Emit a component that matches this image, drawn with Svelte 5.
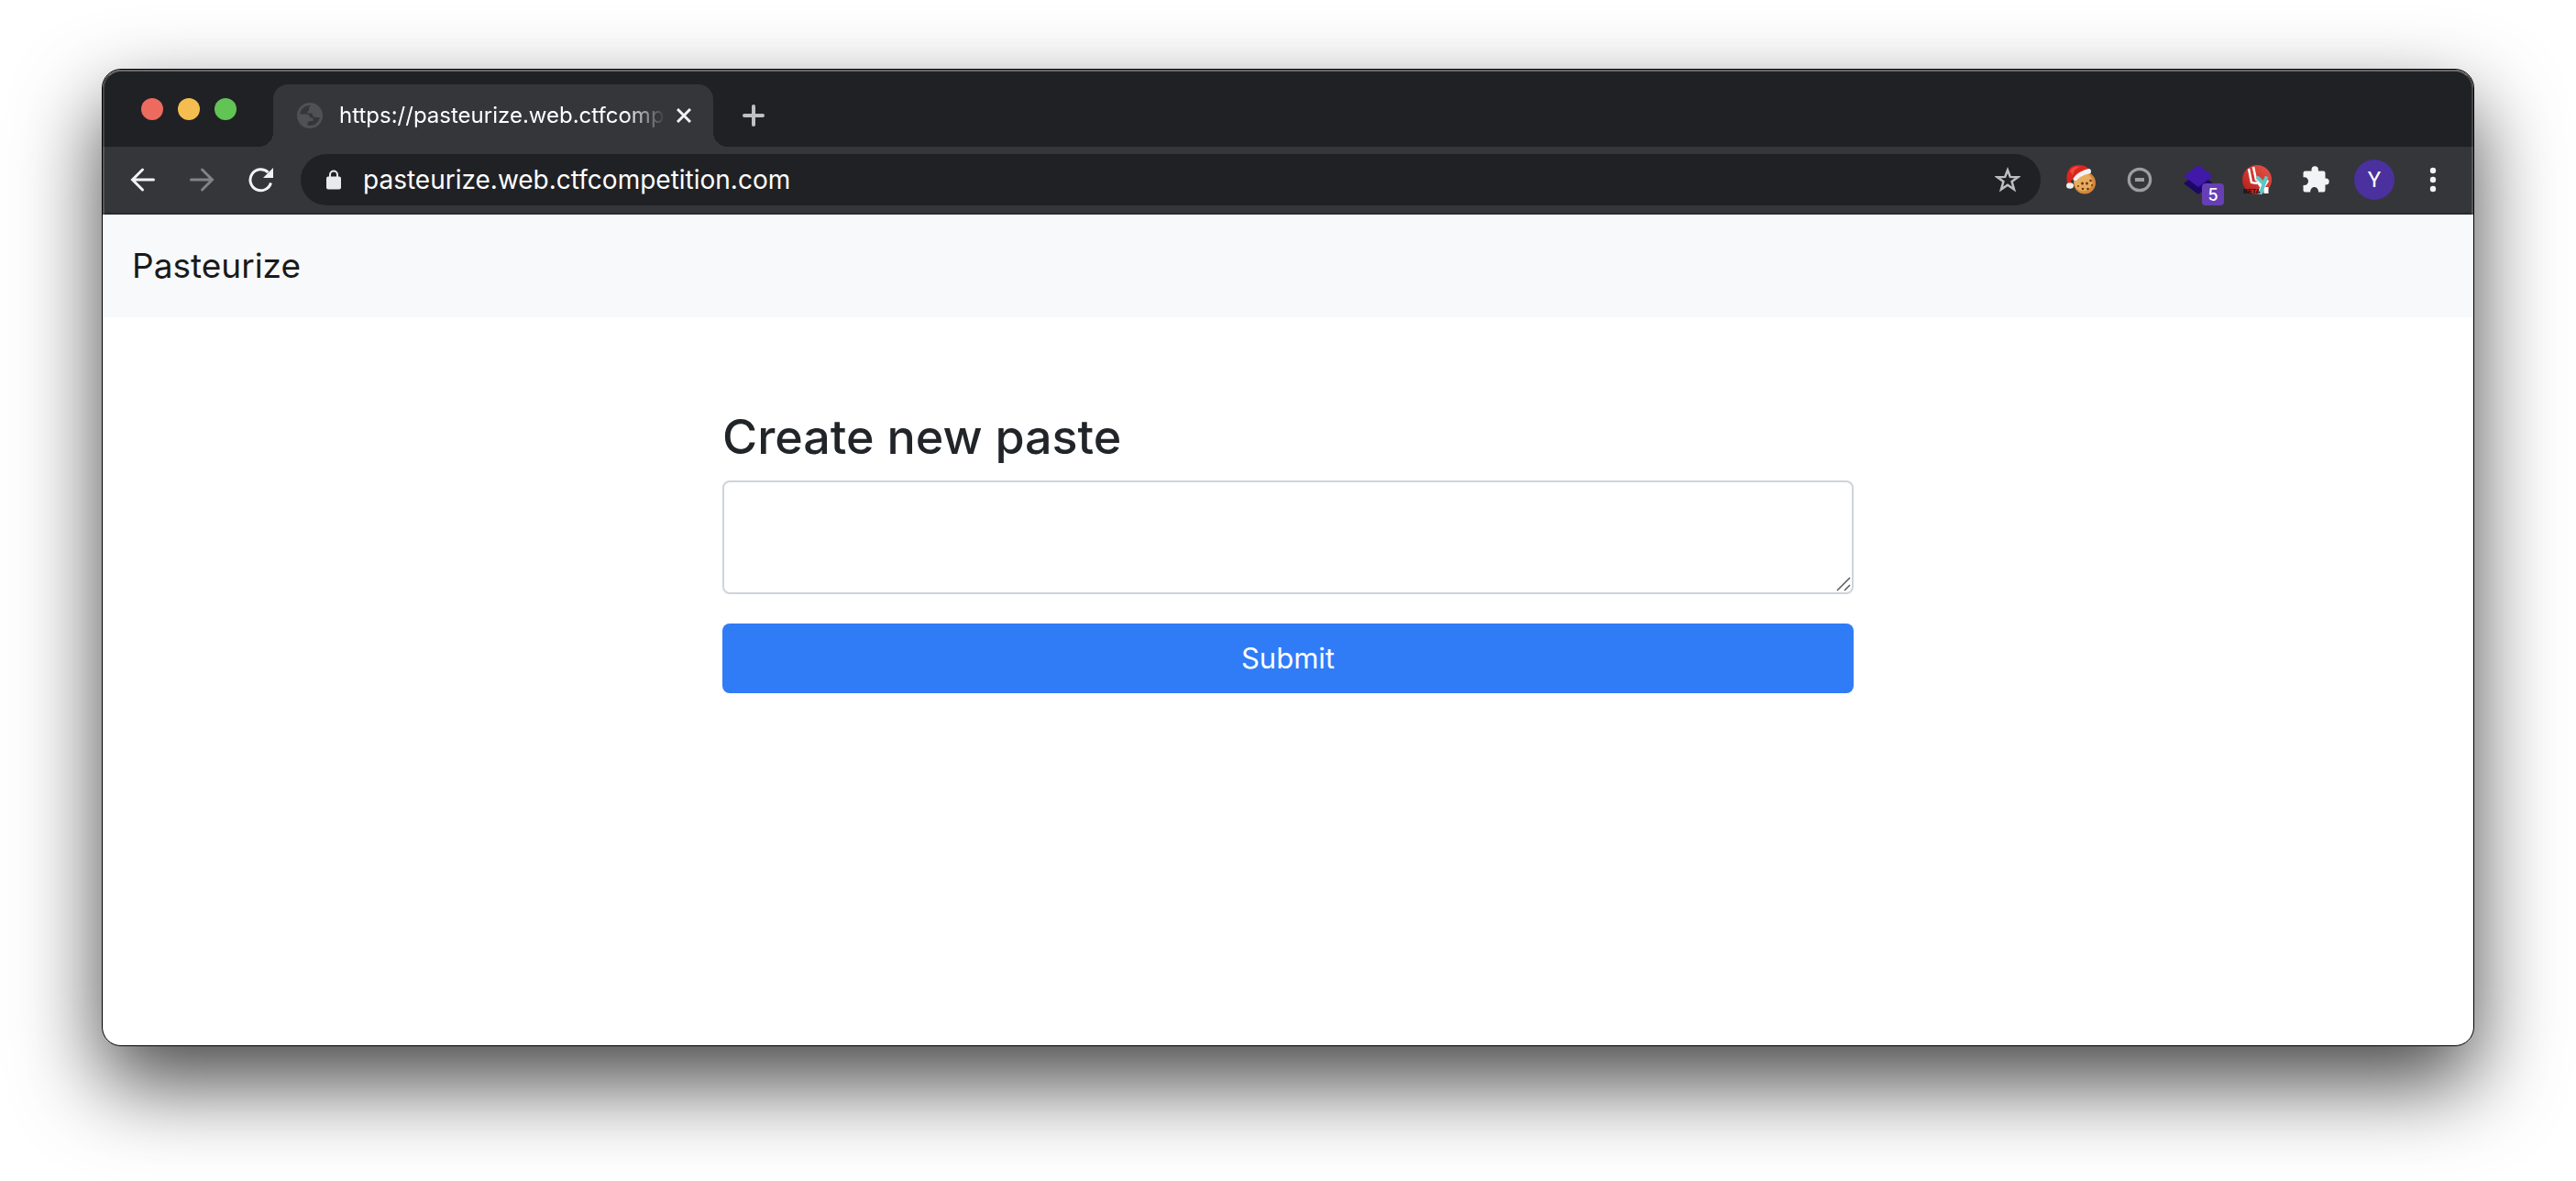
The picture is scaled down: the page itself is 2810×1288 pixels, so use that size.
<script>
  let address = $state('pasteurize.web.ctfcompetition.com');
  let content = $state('');
</script>

<div class="desktop">
  <div class="window">
    <header class="chrome">
      <div class="tabstrip">
        <div class="lights">
          <button class="light red" aria-label="Close window"></button>
          <button class="light yellow" aria-label="Minimize window"></button>
          <button class="light green" aria-label="Zoom window"></button>
        </div>
        <div class="tab">
          <svg class="globe" viewBox="0 0 28 28" aria-hidden="true">
            <circle cx="14" cy="14" r="12.5" fill="none" stroke="#505155" stroke-width="3" />
            <path d="M2 12.500h7.200c3.200 0 4.800 1.600 4.800 4h3.500v3.500h-3.500l-2.500 1.500v3.500l2.500 2.500A13 13 0 0 1 2 12.500z" fill="#505155" />
            <path d="M17 1.500c-1 2-3.600 2-4 4.500v2.500l-1.500 1v2h5c.3 2.500 1.500 4.500 4 4.500h5.500A12.500 12.500 0 0 0 17 1.500z" fill="#505155" />
          </svg>
          <span class="title">https://pasteurize.web.ctfcomp</span>
          <button class="close" aria-label="Close tab">
            <svg viewBox="0 0 16 16"><path d="M1 1l14 14M15 1L1 15" stroke="#f1f3f4" stroke-width="3" /></svg>
          </button>
        </div>
        <button class="icon newtab" aria-label="New tab">
          <svg width="24" height="24" viewBox="0 0 24 24"><path d="M12 2v20M2 12h20" stroke="#bdc1c6" stroke-width="4" stroke-linecap="round" /></svg>
        </button>
      </div>

      <div class="toolbar">
        <nav class="group" aria-label="History">
          <button class="icon" aria-label="Back">
            <svg width="28" height="28" viewBox="0 0 28 28" fill="none" stroke="#f1f3f4" stroke-width="3" stroke-linecap="round"><path d="M25.500 14H3M13.500 3L2.500 14l11 11" /></svg>
          </button>
          <button class="icon" aria-label="Forward">
            <svg width="28" height="28" viewBox="0 0 28 28" fill="none" stroke="#828386" stroke-width="3" stroke-linecap="round"><path d="M2.500 14H25M14.500 3l11 11-11 11" /></svg>
          </button>
          <button class="icon" aria-label="Reload">
            <svg width="28" height="28" viewBox="0 0 28 28" fill="none"><path d="M25.500 17.500A11.500 11.500 0 1 1 22.500 6" stroke="#f1f3f4" stroke-width="3" /><path d="M28 1v11H17z" fill="#f1f3f4" /></svg>
          </button>
        </nav>

        <div class="omnibox">
          <svg width="16" height="22" viewBox="0 0 16 22" aria-hidden="true"><rect y="7.500" width="16" height="14" rx="2" fill="#e8eaed" /><path d="M4 9V5.500a4 4 0 0 1 8 0V9" fill="none" stroke="#e8eaed" stroke-width="2" /></svg>
          <input type="text" aria-label="Address" bind:value={address} />
          <button class="icon" aria-label="Bookmark this page">
            <svg width="28" height="28" viewBox="0 0 28 28"><path d="M14 3.500l2.800 7.400 8.400.3-6.600 4.900 2.400 8.400-7-4.800-7 4.800 2.400-8.400-6.600-4.900 8.400-.3z" fill="none" stroke="#bdbebf" stroke-width="2.500" /></svg>
          </button>
        </div>

        <div class="group">
          <button class="icon" aria-label="Cookie extension">
            <svg width="32" height="32" viewBox="0 0 32 32">
              <circle cx="20" cy="19.500" r="12" fill="#d2873a" />
              <circle cx="18.500" cy="18.500" r="10" fill="#e8ac5e" />
              <g fill="#6b3417">
                <circle cx="17.500" cy="20" r="1.500" /><circle cx="22.500" cy="20" r="1.500" /><circle cx="26.500" cy="17" r="1.300" />
                <circle cx="13" cy="23" r="1" /><circle cx="18" cy="26" r="1.300" /><circle cx="23.500" cy="26" r="1.300" /><circle cx="28" cy="22" r="1" />
              </g>
              <path d="M1 20C-1 10 2 0 13 0c7 0 10 2 12 6L9 15C6 15 5 17 4.500 20z" fill="#dc251f" />
              <path d="M4 7C6 2 10 1 15 2c-4 1-7 4-8 9z" fill="#f04b3d" />
              <path d="M8 14C12 8 18 6 24 4c3-.5 4 3.500 2 5.500C20 10 14 13 11 17c-3 .5-4.500-1-3-3z" fill="#f4f2f1" />
              <ellipse cx="4" cy="22.500" rx="4" ry="3.200" fill="#efeeed" />
            </svg>
          </button>
          <button class="icon" aria-label="Blocker extension">
            <svg width="28" height="28" viewBox="0 0 28 28"><circle cx="14" cy="14" r="11.700" fill="none" stroke="#9d9d9d" stroke-width="3.200" /><rect x="9" y="12" width="10" height="4" fill="#9d9d9d" /></svg>
          </button>
          <button class="icon layers" aria-label="Layers extension, 5 items">
            <svg width="32" height="32" viewBox="0 0 32 32"><path d="M16 8l16 12-16 12L0 20z" fill="#1c0866" /><path d="M16 0l16 12-16 12L0 12z" fill="#4019a8" /></svg>
            <span class="badge">5</span>
          </button>
          <button class="icon" aria-label="LLY beta extension">
            <svg width="32" height="32" viewBox="0 0 32 32">
              <defs><linearGradient id="disc" x1="1" y1="0" x2="0" y2="1"><stop offset="0" stop-color="#e8554b" /><stop offset="1" stop-color="#b51b19" /></linearGradient></defs>
              <circle cx="16" cy="16" r="16" fill="url(#disc)" />
              <path d="M7 4l3 15 6 1M12 2l3 14 5 1" fill="none" stroke="#fff" stroke-width="2.500" />
              <path d="M17 17l5 7 5-8M22 24l-3 7M26 24v7" fill="none" stroke="#fff" stroke-width="5" />
              <path d="M17 14l6 6M26 14l-3 8-3 9" fill="none" stroke="#5cc8c5" stroke-width="4" stroke-linecap="round" />
              <text x="1" y="31" font-size="7" font-weight="700" fill="#101010" class="beta">BETA</text>
            </svg>
          </button>
          <button class="icon" aria-label="Extensions">
            <svg width="32" height="32" viewBox="0 0 32 32"><path d="M4.500 6.500h7V5a3.700 3.700 0 0 1 7.400 0v1.500h5.600a2 2 0 0 1 2 2v6h.7a3.500 3.500 0 0 1 0 7h-.7v6a2 2 0 0 1-2 2h-5.500v-1a4.400 4.400 0 0 0-8.800 0v1H4.500a2 2 0 0 1-2-2v-5.600h1.200a4.300 4.300 0 0 0 0-8.600H2.500V8.500a2 2 0 0 1 2-2z" fill="#f1f3f4" /></svg>
          </button>
          <button class="icon" aria-label="Profile"><span class="avatar">Y</span></button>
          <button class="icon" aria-label="Menu">
            <svg width="8" height="28" viewBox="0 0 8 28" fill="#f1f3f4"><circle cx="4" cy="4" r="3.200" /><circle cx="4" cy="14" r="3.200" /><circle cx="4" cy="24" r="3.200" /></svg>
          </button>
        </div>
      </div>
    </header>

    <nav class="navbar"><a href="/">Pasteurize</a></nav>

    <main>
      <form onsubmit={(event) => event.preventDefault()}>
        <h1><label for="content">Create new paste</label></h1>
        <div class="field">
          <textarea id="content" name="content" bind:value={content}></textarea>
          <svg class="grip" viewBox="0 0 16 16" aria-hidden="true"><path d="M1 15L15 1M9 15l6-6" stroke="#58585a" stroke-width="1.500" /></svg>
        </div>
        <button class="submit" type="submit">Submit</button>
      </form>
    </main>
  </div>
</div>

<style>
  :global(body) {
    margin: 0;
    background: #fff;
  }

  .desktop,
  .desktop * {
    box-sizing: border-box;
  }

  .desktop {
    display: flex;
    min-height: 100vh;
    padding: 75px 111px 147px;
    overflow: hidden;
    font-family: Inter, 'Liberation Sans', sans-serif;
  }

  button,
  input,
  textarea {
    margin: 0;
    padding: 0;
    border: 0;
    background: none;
    font: inherit;
    color: inherit;
  }

  svg {
    display: block;
    flex: none;
  }

  .window {
    display: flex;
    flex: 1;
    flex-direction: column;
    min-width: 0;
    overflow: hidden;
    border: 1px solid #000;
    border-radius: 21px;
    background: #fff;
    box-shadow: 0 40px 92px rgba(0, 0, 0, 0.72);
  }

  .chrome {
    position: relative;
    background: #202124;
    color: #fff;
  }

  /* Light rim along the edge of the window frame */
  .chrome::after {
    content: '';
    position: absolute;
    inset: 0;
    border: 2px solid rgba(255, 255, 255, 0.17);
    border-top-color: rgba(255, 255, 255, 0.32);
    border-bottom: 0;
    border-radius: 20px 20px 0 0;
    pointer-events: none;
  }

  .tabstrip {
    display: flex;
    height: 84px;
    padding-left: 42px;
  }

  .lights {
    display: flex;
    align-items: center;
    gap: 16px;
    margin-right: 40px;
    padding-top: 2px;
  }

  .light {
    width: 24px;
    height: 24px;
    border-radius: 50%;
  }

  .red {
    background: #ed6a5e;
  }

  .yellow {
    background: #f5bd4f;
  }

  .green {
    background: #61c454;
  }

  .tab {
    position: relative;
    display: flex;
    align-items: center;
    width: 480px;
    margin-top: 16px;
    padding: 0 24px 0 26px;
    border-radius: 16px 16px 0 0;
    background: #35363a;
  }

  .tab::before,
  .tab::after {
    content: '';
    position: absolute;
    bottom: 0;
    width: 16px;
    height: 16px;
  }

  .tab::before {
    right: 100%;
    background: radial-gradient(circle at 0 0, transparent 16px, #35363a 16px);
  }

  .tab::after {
    left: 100%;
    background: radial-gradient(circle at 100% 0, transparent 16px, #35363a 16px);
  }

  .globe {
    width: 28px;
    height: 28px;
    margin-right: 18px;
  }

  .title {
    flex: 1;
    margin-right: 12px;
    font-size: 24px;
    line-height: 32px;
    white-space: nowrap;
    mask-image: linear-gradient(to left, transparent, #000 44px);
  }

  .close {
    width: 16px;
    height: 16px;
  }

  .icon {
    display: flex;
    flex: none;
    align-items: center;
    justify-content: center;
    width: 56px;
    height: 56px;
  }

  .newtab {
    align-self: flex-end;
    margin: 0 16px 6px;
  }

  .toolbar {
    display: flex;
    gap: 16px;
    padding: 8px 16px;
    border-bottom: 2px solid #28292b;
    background: #35363a;
  }

  .group {
    display: flex;
    gap: 8px;
  }

  .omnibox {
    display: flex;
    flex: 1;
    align-items: center;
    min-width: 0;
    padding: 0 8px 0 28px;
    border-radius: 28px;
    background: #202124;
  }

  .omnibox input {
    flex: 1;
    min-width: 0;
    margin-left: 24px;
    font-size: 28px;
    line-height: 40px;
    outline: none;
  }

  .layers {
    position: relative;
  }

  .badge {
    position: absolute;
    right: 0;
    bottom: 0;
    width: 24px;
    height: 24px;
    border-radius: 4px;
    background: #673fb4;
    font-size: 18px;
    font-weight: 500;
    line-height: 26px;
    text-align: center;
  }

  .beta {
    font-family: 'Liberation Sans', sans-serif;
  }

  .avatar {
    width: 44px;
    height: 44px;
    border-radius: 50%;
    background: #4a319e;
    font-family: Roboto, sans-serif;
    font-size: 24px;
    line-height: 44px;
    text-align: center;
  }

  .navbar {
    display: flex;
    align-items: center;
    height: 112px;
    padding: 0 32px;
    background: #f8f9fa;
  }

  .navbar a {
    color: #1a1a1a;
    font-size: 37px;
    line-height: 60px;
    text-decoration: none;
  }

  main {
    display: flex;
    justify-content: center;
    padding: 96px 32px;
  }

  form {
    width: 100%;
    max-width: 1234px;
  }

  h1 {
    margin: 0 0 12px;
    color: #212529;
    font-size: 52px;
    font-weight: 500;
    line-height: 70px;
  }

  .field {
    position: relative;
    margin-bottom: 32px;
  }

  textarea {
    display: block;
    width: 100%;
    height: 124px;
    padding: 12px 24px;
    border: 2px solid #ced4da;
    border-radius: 8px;
    background: #fff;
    color: #495057;
    font-size: 32px;
    line-height: 48px;
    resize: none;
  }

  .grip {
    position: absolute;
    right: 3px;
    bottom: 3px;
    width: 16px;
    height: 16px;
  }

  .submit {
    width: 100%;
    height: 76px;
    border-radius: 8px;
    background: #307cf6;
    color: #fff;
    font-size: 31px;
    line-height: 48px;
  }
</style>
